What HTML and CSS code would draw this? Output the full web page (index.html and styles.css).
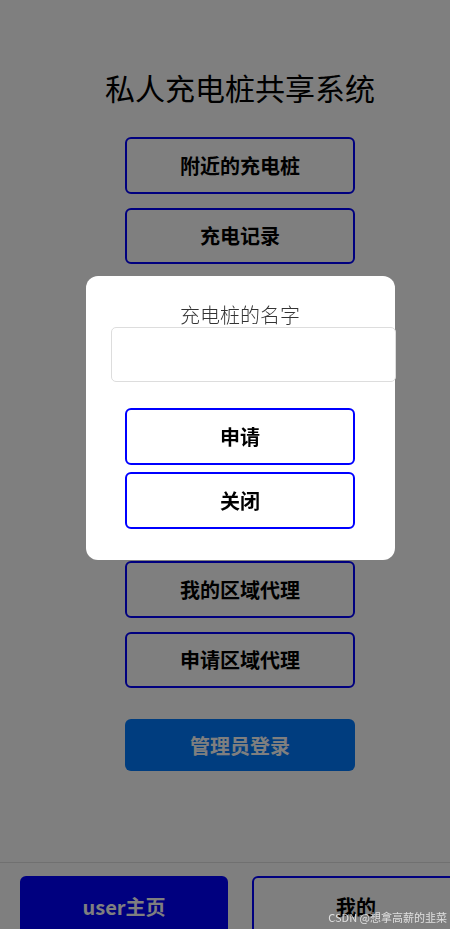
FILE: index.html
```html
<!DOCTYPE html>
<html lang="zh-CN">
<head>
    <meta charset="UTF-8">
    <meta name="viewport" content="width=device-width, initial-scale=1.0">
    <title>私人充电桩共享系统</title>
    <link rel="stylesheet" href="styles.css">
</head>
<body>
    <div class="page">
        <h1 class="title">私人充电桩共享系统</h1>
        <div class="menu">
            <button class="menu-btn">附近的充电桩</button>
            <button class="menu-btn">充电记录</button>
            <!-- these four sit behind the dialog -->
            <button class="menu-btn"></button>
            <button class="menu-btn"></button>
            <button class="menu-btn"></button>
            <button class="menu-btn"></button>
            <button class="menu-btn">我的区域代理</button>
            <button class="menu-btn">申请区域代理</button>
        </div>
        <button class="admin-btn">管理员登录</button>
    </div>

    <div class="tabbar">
        <button class="tab tab-active">user主页</button>
        <button class="tab">我的</button>
    </div>

    <div class="mask">
        <div class="dialog">
            <div class="dialog-label">充电桩的名字</div>
            <input type="text" class="dialog-input">
            <div class="dialog-actions">
                <button class="menu-btn">申请</button>
                <button class="menu-btn">关闭</button>
            </div>
        </div>
    </div>

    <div class="watermark">CSDN @想拿高薪的韭菜</div>
</body>
</html>
```

FILE: styles.css
```css
* {
    padding: 0;
    margin: 0;
    box-sizing: border-box;
}
html, body {
    overflow: hidden;
}
body {
    font-family: "Noto Sans CJK SC", "Noto Sans", sans-serif;
    background: #fff;
    color: #000;
    height: 100vh;
}
.page {
    width: 480px;
    display: flex;
    flex-direction: column;
    align-items: center;
}
.title {
    margin-top: 67px;
    font-size: 30px;
    line-height: 40px;
    font-weight: 400;
    color: #000;
}
.menu {
    margin-top: 30px;
    display: flex;
    flex-direction: column;
    gap: 14px;
}
.menu-btn {
    width: 230px;
    height: 56.67px;
    background: #fff;
    border: 2px solid #0000ff;
    border-radius: 6px;
    font-family: inherit;
    font-size: 20px;
    font-weight: 700;
    color: #000;
}
.admin-btn {
    margin-top: 31px;
    width: 230px;
    height: 52px;
    background: #007aff;
    border: none;
    border-radius: 6px;
    font-family: inherit;
    font-size: 20px;
    font-weight: 700;
    color: #fff;
}
.tabbar {
    position: fixed;
    left: 0;
    bottom: 0;
    width: 480px;
    height: 67px;
    border-top: 1px solid #e0e0e0;
    background: #fff;
    display: flex;
    gap: 24px;
    padding: 13px 20px 0;
}
.tab {
    flex: 1;
    height: 60px;
    background: #fff;
    border: 2px solid #0000ff;
    border-radius: 6px;
    font-family: inherit;
    font-size: 20px;
    font-weight: 700;
    color: #000;
}
.tab-active {
    background: #0000ff;
    color: #fff;
}
.mask {
    position: fixed;
    top: 0;
    left: 0;
    width: 480px;
    height: 100%;
    background: rgba(0, 0, 0, 0.5);
    display: flex;
    justify-content: center;
    align-items: flex-start;
    padding-top: 276px;
}
.dialog {
    width: 309px;
    height: 284px;
    background: #fff;
    border-radius: 12px;
    padding-top: 27px;
}
.dialog-label {
    text-align: center;
    font-size: 20px;
    line-height: 24px;
    color: #333;
    font-weight: 300;
}
.dialog-input {
    display: block;
    margin-left: 25px;
    width: 285px;
    height: 55px;
    border: 1px solid #ddd;
    border-radius: 5px;
    background: #fff;
    outline: none;
}
.dialog-actions {
    margin-top: 26px;
    display: flex;
    flex-direction: column;
    align-items: center;
    gap: 7.33px;
}
.watermark {
    position: fixed;
    right: 3px;
    bottom: 4px;
    font-size: 11px;
    color: rgba(255, 255, 255, 0.75);
}
```
